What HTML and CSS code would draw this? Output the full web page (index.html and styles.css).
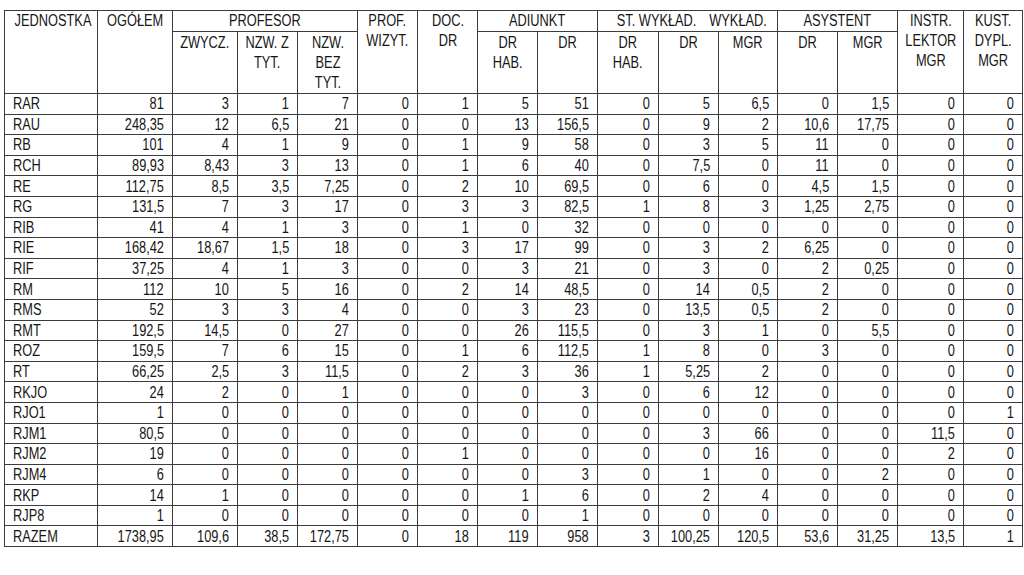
FILE: index.html
```html
<!DOCTYPE html>
<html lang="pl">
<head>
<meta charset="utf-8">
<title>Zatrudnienie</title>
<link rel="stylesheet" href="styles.css">
</head>
<body>
<div class="page">
<table class="grid">
<colgroup>
<col class="c93"><col class="c75"><col class="c65"><col class="c60"><col class="c60"><col class="c60"><col class="c60"><col class="c60"><col class="c60"><col class="c61"><col class="c60"><col class="c59"><col class="c60"><col class="c60"><col class="c66"><col class="c59">
</colgroup>
<thead>
<tr class="h1">
<th rowspan="2"><span>JEDNOSTKA</span></th>
<th rowspan="2"><span>OGÓŁEM</span></th>
<th colspan="3"><span>PROFESOR</span></th>
<th rowspan="2"><span>PROF.<br>WIZYT.</span></th>
<th rowspan="2"><span>DOC.<br>DR</span></th>
<th colspan="2"><span>ADIUNKT</span></th>
<th colspan="3"><span>ST. WYKŁAD.<i class="gap"></i>WYKŁAD.</span></th>
<th colspan="2"><span>ASYSTENT</span></th>
<th rowspan="2"><span>INSTR.<br>LEKTOR<br>MGR</span></th>
<th rowspan="2"><span>KUST.<br>DYPL.<br>MGR</span></th>
</tr>
<tr class="h2">
<th><span>ZWYCZ.</span></th>
<th><span>NZW. Z<br>TYT.</span></th>
<th><span>NZW.<br>BEZ<br>TYT.</span></th>
<th><span>DR<br>HAB.</span></th>
<th><span>DR</span></th>
<th><span>DR<br>HAB.</span></th>
<th><span>DR</span></th>
<th><span>MGR</span></th>
<th><span>DR</span></th>
<th><span>MGR</span></th>
</tr>
</thead>
<tbody>
<tr><td><span>RAR</span></td><td><span>81</span></td><td><span>3</span></td><td><span>1</span></td><td><span>7</span></td><td><span>0</span></td><td><span>1</span></td><td><span>5</span></td><td><span>51</span></td><td><span>0</span></td><td><span>5</span></td><td><span>6,5</span></td><td><span>0</span></td><td><span>1,5</span></td><td><span>0</span></td><td><span>0</span></td></tr>
<tr><td><span>RAU</span></td><td><span>248,35</span></td><td><span>12</span></td><td><span>6,5</span></td><td><span>21</span></td><td><span>0</span></td><td><span>0</span></td><td><span>13</span></td><td><span>156,5</span></td><td><span>0</span></td><td><span>9</span></td><td><span>2</span></td><td><span>10,6</span></td><td><span>17,75</span></td><td><span>0</span></td><td><span>0</span></td></tr>
<tr><td><span>RB</span></td><td><span>101</span></td><td><span>4</span></td><td><span>1</span></td><td><span>9</span></td><td><span>0</span></td><td><span>1</span></td><td><span>9</span></td><td><span>58</span></td><td><span>0</span></td><td><span>3</span></td><td><span>5</span></td><td><span>11</span></td><td><span>0</span></td><td><span>0</span></td><td><span>0</span></td></tr>
<tr><td><span>RCH</span></td><td><span>89,93</span></td><td><span>8,43</span></td><td><span>3</span></td><td><span>13</span></td><td><span>0</span></td><td><span>1</span></td><td><span>6</span></td><td><span>40</span></td><td><span>0</span></td><td><span>7,5</span></td><td><span>0</span></td><td><span>11</span></td><td><span>0</span></td><td><span>0</span></td><td><span>0</span></td></tr>
<tr><td><span>RE</span></td><td><span>112,75</span></td><td><span>8,5</span></td><td><span>3,5</span></td><td><span>7,25</span></td><td><span>0</span></td><td><span>2</span></td><td><span>10</span></td><td><span>69,5</span></td><td><span>0</span></td><td><span>6</span></td><td><span>0</span></td><td><span>4,5</span></td><td><span>1,5</span></td><td><span>0</span></td><td><span>0</span></td></tr>
<tr><td><span>RG</span></td><td><span>131,5</span></td><td><span>7</span></td><td><span>3</span></td><td><span>17</span></td><td><span>0</span></td><td><span>3</span></td><td><span>3</span></td><td><span>82,5</span></td><td><span>1</span></td><td><span>8</span></td><td><span>3</span></td><td><span>1,25</span></td><td><span>2,75</span></td><td><span>0</span></td><td><span>0</span></td></tr>
<tr><td><span>RIB</span></td><td><span>41</span></td><td><span>4</span></td><td><span>1</span></td><td><span>3</span></td><td><span>0</span></td><td><span>1</span></td><td><span>0</span></td><td><span>32</span></td><td><span>0</span></td><td><span>0</span></td><td><span>0</span></td><td><span>0</span></td><td><span>0</span></td><td><span>0</span></td><td><span>0</span></td></tr>
<tr><td><span>RIE</span></td><td><span>168,42</span></td><td><span>18,67</span></td><td><span>1,5</span></td><td><span>18</span></td><td><span>0</span></td><td><span>3</span></td><td><span>17</span></td><td><span>99</span></td><td><span>0</span></td><td><span>3</span></td><td><span>2</span></td><td><span>6,25</span></td><td><span>0</span></td><td><span>0</span></td><td><span>0</span></td></tr>
<tr><td><span>RIF</span></td><td><span>37,25</span></td><td><span>4</span></td><td><span>1</span></td><td><span>3</span></td><td><span>0</span></td><td><span>0</span></td><td><span>3</span></td><td><span>21</span></td><td><span>0</span></td><td><span>3</span></td><td><span>0</span></td><td><span>2</span></td><td><span>0,25</span></td><td><span>0</span></td><td><span>0</span></td></tr>
<tr><td><span>RM</span></td><td><span>112</span></td><td><span>10</span></td><td><span>5</span></td><td><span>16</span></td><td><span>0</span></td><td><span>2</span></td><td><span>14</span></td><td><span>48,5</span></td><td><span>0</span></td><td><span>14</span></td><td><span>0,5</span></td><td><span>2</span></td><td><span>0</span></td><td><span>0</span></td><td><span>0</span></td></tr>
<tr><td><span>RMS</span></td><td><span>52</span></td><td><span>3</span></td><td><span>3</span></td><td><span>4</span></td><td><span>0</span></td><td><span>0</span></td><td><span>3</span></td><td><span>23</span></td><td><span>0</span></td><td><span>13,5</span></td><td><span>0,5</span></td><td><span>2</span></td><td><span>0</span></td><td><span>0</span></td><td><span>0</span></td></tr>
<tr><td><span>RMT</span></td><td><span>192,5</span></td><td><span>14,5</span></td><td><span>0</span></td><td><span>27</span></td><td><span>0</span></td><td><span>0</span></td><td><span>26</span></td><td><span>115,5</span></td><td><span>0</span></td><td><span>3</span></td><td><span>1</span></td><td><span>0</span></td><td><span>5,5</span></td><td><span>0</span></td><td><span>0</span></td></tr>
<tr><td><span>ROZ</span></td><td><span>159,5</span></td><td><span>7</span></td><td><span>6</span></td><td><span>15</span></td><td><span>0</span></td><td><span>1</span></td><td><span>6</span></td><td><span>112,5</span></td><td><span>1</span></td><td><span>8</span></td><td><span>0</span></td><td><span>3</span></td><td><span>0</span></td><td><span>0</span></td><td><span>0</span></td></tr>
<tr><td><span>RT</span></td><td><span>66,25</span></td><td><span>2,5</span></td><td><span>3</span></td><td><span>11,5</span></td><td><span>0</span></td><td><span>2</span></td><td><span>3</span></td><td><span>36</span></td><td><span>1</span></td><td><span>5,25</span></td><td><span>2</span></td><td><span>0</span></td><td><span>0</span></td><td><span>0</span></td><td><span>0</span></td></tr>
<tr><td><span>RKJO</span></td><td><span>24</span></td><td><span>2</span></td><td><span>0</span></td><td><span>1</span></td><td><span>0</span></td><td><span>0</span></td><td><span>0</span></td><td><span>3</span></td><td><span>0</span></td><td><span>6</span></td><td><span>12</span></td><td><span>0</span></td><td><span>0</span></td><td><span>0</span></td><td><span>0</span></td></tr>
<tr><td><span>RJO1</span></td><td><span>1</span></td><td><span>0</span></td><td><span>0</span></td><td><span>0</span></td><td><span>0</span></td><td><span>0</span></td><td><span>0</span></td><td><span>0</span></td><td><span>0</span></td><td><span>0</span></td><td><span>0</span></td><td><span>0</span></td><td><span>0</span></td><td><span>0</span></td><td><span>1</span></td></tr>
<tr><td><span>RJM1</span></td><td><span>80,5</span></td><td><span>0</span></td><td><span>0</span></td><td><span>0</span></td><td><span>0</span></td><td><span>0</span></td><td><span>0</span></td><td><span>0</span></td><td><span>0</span></td><td><span>3</span></td><td><span>66</span></td><td><span>0</span></td><td><span>0</span></td><td><span>11,5</span></td><td><span>0</span></td></tr>
<tr><td><span>RJM2</span></td><td><span>19</span></td><td><span>0</span></td><td><span>0</span></td><td><span>0</span></td><td><span>0</span></td><td><span>1</span></td><td><span>0</span></td><td><span>0</span></td><td><span>0</span></td><td><span>0</span></td><td><span>16</span></td><td><span>0</span></td><td><span>0</span></td><td><span>2</span></td><td><span>0</span></td></tr>
<tr><td><span>RJM4</span></td><td><span>6</span></td><td><span>0</span></td><td><span>0</span></td><td><span>0</span></td><td><span>0</span></td><td><span>0</span></td><td><span>0</span></td><td><span>3</span></td><td><span>0</span></td><td><span>1</span></td><td><span>0</span></td><td><span>0</span></td><td><span>2</span></td><td><span>0</span></td><td><span>0</span></td></tr>
<tr><td><span>RKP</span></td><td><span>14</span></td><td><span>1</span></td><td><span>0</span></td><td><span>0</span></td><td><span>0</span></td><td><span>0</span></td><td><span>1</span></td><td><span>6</span></td><td><span>0</span></td><td><span>2</span></td><td><span>4</span></td><td><span>0</span></td><td><span>0</span></td><td><span>0</span></td><td><span>0</span></td></tr>
<tr><td><span>RJP8</span></td><td><span>1</span></td><td><span>0</span></td><td><span>0</span></td><td><span>0</span></td><td><span>0</span></td><td><span>0</span></td><td><span>0</span></td><td><span>1</span></td><td><span>0</span></td><td><span>0</span></td><td><span>0</span></td><td><span>0</span></td><td><span>0</span></td><td><span>0</span></td><td><span>0</span></td></tr>
<tr><td><span>RAZEM</span></td><td><span>1738,95</span></td><td><span>109,6</span></td><td><span>38,5</span></td><td><span>172,75</span></td><td><span>0</span></td><td><span>18</span></td><td><span>119</span></td><td><span>958</span></td><td><span>3</span></td><td><span>100,25</span></td><td><span>120,5</span></td><td><span>53,6</span></td><td><span>31,25</span></td><td><span>13,5</span></td><td><span>1</span></td></tr>
</tbody>
</table>
</div>
</body>
</html>
```
FILE: styles.css
```css
html, body {
  margin: 0;
  padding: 0;
  background: #ffffff;
}

.page {
  padding: 10px 0 0 4px;
  font-family: "Liberation Sans", Arial, sans-serif;
  font-size: 16px;
  color: #161616;
}

.grid {
  border-collapse: collapse;
  table-layout: fixed;
  width: 1019px;
}

.c93 { width: 93px; }
.c75 { width: 75px; }
.c65 { width: 65px; }
.c66 { width: 66px; }
.c61 { width: 61px; }
.c60 { width: 60px; }
.c59 { width: 59px; }

.grid th,
.grid td {
  border: 1px solid #3c3c3c;
  padding: 0;
  overflow: hidden;
  white-space: nowrap;
}

/* condensed glyphs, like a narrow face */
.grid th > span,
.grid td > span {
  display: inline-block;
  transform: scaleX(0.8);
}

.grid th {
  font-weight: normal;
  text-align: center;
  vertical-align: top;
  line-height: 20px;
}

.grid th > span {
  transform-origin: center top;
}

.h1 th {
  height: 20px;
}

.h2 th {
  height: 58px;
  padding-top: 1px;
}

.gap {
  display: inline-block;
  width: 16px;
}

.grid td {
  height: 19.6px;
  line-height: 19px;
  text-align: right;
  padding: 0 8px 0 0;
  vertical-align: middle;
}

.grid td > span {
  transform-origin: right center;
}

.grid td:first-child {
  text-align: left;
  padding: 0 0 0 8px;
}

.grid td:first-child > span {
  transform-origin: left center;
}
```
